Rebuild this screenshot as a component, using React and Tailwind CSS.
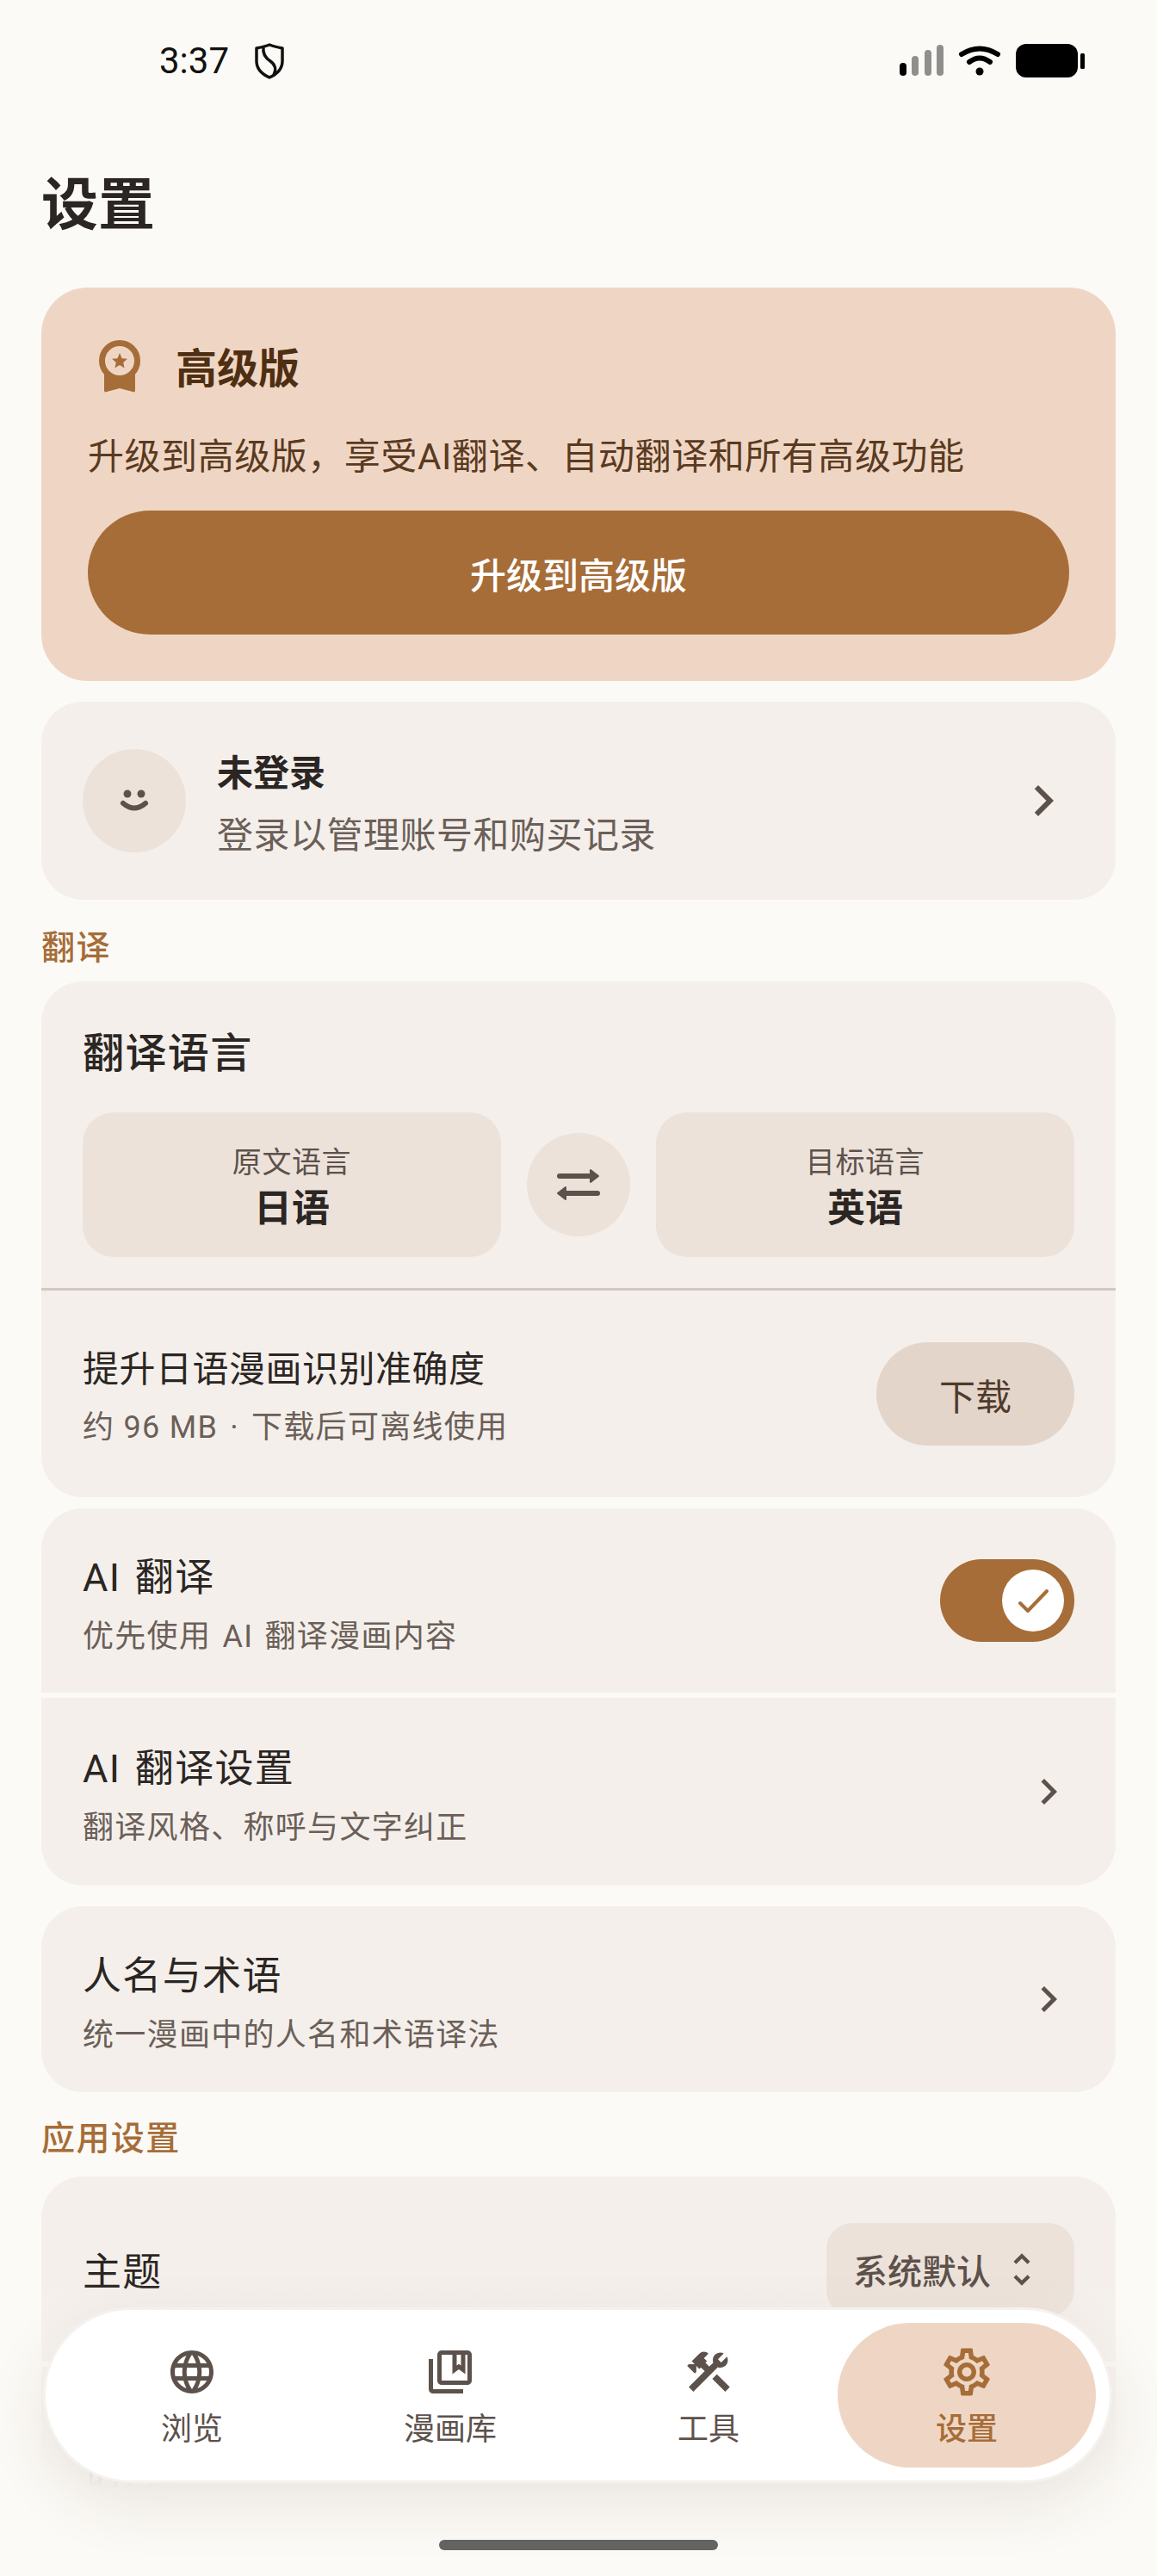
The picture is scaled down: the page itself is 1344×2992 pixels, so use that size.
import {
  MdChevronRight,
  MdConstruction,
  MdLanguage,
  MdOutlineCollectionsBookmark,
  MdOutlineSettings,
  MdUnfoldMore,
} from "react-icons/md";

const navItems = [
  { icon: <MdLanguage size={60} />, label: "浏览" },
  { icon: <MdOutlineCollectionsBookmark size={60} />, label: "漫画库" },
  { icon: <MdConstruction size={60} />, label: "工具" },
  { icon: <MdOutlineSettings size={66} className="-my-[3px]" />, label: "设置", active: true },
];

const StatusBar = () => (
  <div className="h-[190px] relative">
    <div className="flex items-center h-[142px] pl-[185px] pr-[84px]">
      <span className="font-['Roboto'] text-[42px] leading-none text-[#111]">3:37</span>
      <svg width="34" height="42" viewBox="0 0 34 42" fill="none" stroke="#111" strokeWidth="3.5" className="ml-[30px]">
        <path d="M17 2C22 4 27 5 32 6V21C32 30 26 36 17 40C8 36 2 30 2 21V6C7 5 12 4 17 2Z" strokeLinejoin="round" />
        <path d="M10 5C9 12 12 17 18 21C24 25 25 31 22 37" />
      </svg>
      <div className="flex-1" />
      <svg width="215" height="40" viewBox="0 0 215 40">
        <rect x="0" y="22" width="8" height="15" rx="4" fill="#000" />
        <rect x="14" y="14" width="8" height="23" rx="4" fill="#8f8f8d" />
        <rect x="29" y="7" width="8" height="30" rx="4" fill="#8f8f8d" />
        <rect x="43" y="1" width="8" height="36" rx="4" fill="#8f8f8d" />
        <path d="M72 12Q93 -1 114 12" fill="none" stroke="#000" strokeWidth="6" strokeLinecap="round" />
        <path d="M81 21Q93 12 105 21" fill="none" stroke="#000" strokeWidth="6" strokeLinecap="round" />
        <circle cx="93" cy="32" r="4.5" fill="#000" />
        <rect x="135" y="0" width="72" height="39" rx="12" fill="#000" />
        <rect x="210" y="11" width="5" height="18" rx="1.5" fill="#000" />
      </svg>
    </div>
  </div>
);

const MedalIcon = () => (
  <svg width="49" height="62" viewBox="0 0 49 62" fill="none">
    <path d="M7 38H43V59C43 61 42 62 40 61L25 57L10 61C8 62 7 61 7 59Z" fill="#a66d38" />
    <circle cx="25" cy="25" r="20.5" fill="#efd6c4" stroke="#a66d38" strokeWidth="7" />
    <path d="M25 16L27.6 22.2L34 22.8L29.2 27L30.6 33.4L25 30L19.4 33.4L20.8 27L16 22.8L22.4 22.2Z" fill="#a66d38" />
  </svg>
);

const SmileIcon = () => (
  <svg width="40" height="32" viewBox="0 0 40 32" fill="none">
    <circle cx="12" cy="8" r="4.5" fill="#5d514b" />
    <circle cx="28" cy="8" r="4.5" fill="#5d514b" />
    <path d="M7 19Q20 30 33 19" stroke="#5d514b" strokeWidth="6" strokeLinecap="round" />
  </svg>
);

const SwapIcon = () => (
  <svg width="50" height="36" viewBox="0 0 50 36" fill="#5d514b" stroke="#5d514b">
    <path d="M3 8H40" strokeWidth="6" strokeLinecap="round" />
    <path d="M39 1L48 8L39 15Z" strokeWidth="2" strokeLinejoin="round" />
    <path d="M47 28H10" strokeWidth="6" strokeLinecap="round" />
    <path d="M10 21L1 28L10 35Z" strokeWidth="2" strokeLinejoin="round" />
  </svg>
);

const SectionTitle = ({ children, className }) => (
  <div className={`h-[50px] flex items-center text-[39px] tracking-[1.4px] font-medium text-[#a66d38] ${className}`}>{children}</div>
);

const TextPair = ({ title, sub }) => (
  <div className="flex flex-col gap-[10px] mt-[15px]">
    <div className="h-[58px] flex items-center text-[45px] tracking-[1.35px] [word-spacing:4px] text-[#2b2623] whitespace-pre">{title}</div>
    <div className="h-[58px] flex items-center text-[36px] tracking-[1.3px] [word-spacing:3px] text-[#6b5f58] whitespace-pre">{sub}</div>
  </div>
);

const LangBox = ({ label, value }) => (
  <div className="flex-1 h-[168px] pt-[6px] rounded-[36px] bg-[#ece2da] flex flex-col items-center justify-center">
    <div className="text-[34px] tracking-[0.6px] leading-[46px] text-[#5d514b]">{label}</div>
    <div className="mt-[3px] text-[44px] leading-[56px] font-bold text-[#2b2623]">{value}</div>
  </div>
);

const LinkRow = ({ title, sub, className }) => (
  <div className={`flex items-center justify-between px-[48px] bg-[#f4efeb] ${className}`}>
    <TextPair title={title} sub={sub} />
    <MdChevronRight size={60} className="text-[#5d514b]" />
  </div>
);

const BottomNav = () => (
  <div className="absolute left-[50px] top-[2680px] w-[1242px] h-[204px] rounded-full bg-white border-[3px] border-[#f5f2ee] shadow-[0_24px_70px_rgba(70,50,30,0.1)] flex pl-[20px] py-[15px]">
    {navItems.map((item) => (
      <div
        key={item.label}
        className={`w-[300px] h-[168px] rounded-full flex flex-col items-center pt-[27px] ${
          item.active ? "bg-[#efd6c4] text-[#a66d38]" : "text-[#5d514b]"
        }`}
      >
        {item.icon}
        <div className={`mt-[15px] h-[44px] flex items-center text-[36px] ${item.active ? "font-medium" : ""}`}>{item.label}</div>
      </div>
    ))}
  </div>
);

export default function App() {
  return (
    <div className="relative w-[1344px] h-[2992px] overflow-hidden bg-[#fcfaf6] font-['Roboto','Noto_Sans_CJK_SC',sans-serif]">
      <StatusBar />

      <div className="h-[96px] flex items-center pl-[48px] text-[66px] font-bold text-[#2b2623]">设置</div>

      <div className="px-[48px] pt-[48px]">
        {/* Premium card */}
        <div className="rounded-[54px] bg-[#efd6c4] px-[54px] pt-[54px] pb-[54px]">
          <div className="h-[74px] flex items-center">
            <div className="w-[72px] flex justify-center"><MedalIcon /></div>
            <div className="ml-[30px] mt-[8px] text-[48px] font-bold text-[#4f2f12]">高级版</div>
          </div>
          <div className="mt-[36px] h-[64px] flex items-center text-[42px] tracking-[0.55px] text-[#5a3a1f]">升级到高级版，享受AI翻译、自动翻译和所有高级功能</div>
          <div className="mt-[31px] h-[144px] pt-[8px] rounded-full bg-[#a66d38] flex items-center justify-center text-[42px] font-medium text-white">升级到高级版</div>
        </div>

        {/* Login */}
        <div className="mt-[24px] h-[230px] rounded-[48px] bg-[#f4efeb] flex items-center px-[48px]">
          <div className="w-[120px] h-[120px] rounded-full bg-[#ece2da] flex items-center justify-center"><SmileIcon /></div>
          <div className="ml-[36px] mt-[8px] flex-1 flex flex-col gap-[16px]">
            <div className="h-[56px] flex items-center text-[42px] font-bold text-[#2b2623]">未登录</div>
            <div className="h-[56px] flex items-center text-[42px] tracking-[0.5px] text-[#6b5f58]">登录以管理账号和购买记录</div>
          </div>
          <MdChevronRight size={72} className="text-[#5d514b]" />
        </div>

        <SectionTitle className="mt-[31px] mb-[14px]">翻译</SectionTitle>

        {/* Translate language */}
        <div className="rounded-[48px] bg-[#f4efeb] overflow-hidden">
          <div className="px-[48px] pt-[52px] pb-[36px]">
            <div className="h-[64px] flex items-center text-[48px] tracking-[1.4px] font-medium text-[#2b2623]">翻译语言</div>
            <div className="mt-[36px] flex items-center gap-[30px]">
              <LangBox label="原文语言" value="日语" />
              <div className="w-[120px] h-[120px] rounded-full bg-[#ece2da] flex items-center justify-center"><SwapIcon /></div>
              <LangBox label="目标语言" value="英语" />
            </div>
          </div>
          <div className="h-[3px] bg-[#d3c8c1]" />
          <div className="h-[240px] flex items-center justify-between px-[48px]">
            <div className="flex flex-col gap-[10px] mt-[10px]">
              <div className="h-[58px] flex items-center text-[42px] tracking-[0.5px] text-[#2b2623]">提升日语漫画识别准确度</div>
              <div className="h-[58px] flex items-center text-[36px] tracking-[1.3px] text-[#6b5f58] whitespace-pre">
                约 96 MB<span className="mx-[14px]">·</span>下载后可离线使用
              </div>
            </div>
            <div className="w-[230px] h-[120px] pt-[8px] rounded-full bg-[#e3d5ca] flex items-center justify-center text-[42px] text-[#4f3a2a]">下载</div>
          </div>
        </div>

        {/* AI */}
        <div className="mt-[13px] rounded-[48px] overflow-hidden flex flex-col gap-[6px]">
          <div className="h-[214px] bg-[#f4efeb] flex items-center justify-between px-[48px]">
            <TextPair title="AI 翻译" sub="优先使用 AI 翻译漫画内容" />
            <div className="w-[156px] h-[96px] rounded-full bg-[#a66d38] flex items-center justify-end pr-[12px]">
              <div className="w-[72px] h-[72px] rounded-full bg-white flex items-center justify-center">
                <svg width="40" height="32" viewBox="0 0 40 32" fill="none">
                  <path d="M5 19L14 28L36 5" stroke="#a66d38" strokeWidth="4" strokeLinecap="round" strokeLinejoin="round" />
                </svg>
              </div>
            </div>
          </div>
          <LinkRow title="AI 翻译设置" sub="翻译风格、称呼与文字纠正" className="h-[218px]" />
        </div>

        <LinkRow title="人名与术语" sub="统一漫画中的人名和术语译法" className="mt-[24px] h-[216px] rounded-[48px]" />

        <SectionTitle className="mt-[29px] mb-[19px]">应用设置</SectionTitle>

        {/* App settings */}
        <div className="rounded-t-[48px] bg-[#f4efeb]">
          <div className="h-[215px] flex items-center justify-between px-[48px]">
            <div className="mt-[8px] text-[45px] text-[#2b2623] tracking-[1.35px]">主题</div>
            <div className="w-[288px] h-[108px] rounded-[30px] bg-[#ece2da] flex items-center pl-[31px] text-[40px] font-medium text-[#5d514b]">
              <span className="mt-[8px]">系统默认</span>
              <MdUnfoldMore size={50} className="ml-[11px] text-[#5d514b]" />
            </div>
          </div>
          <div className="h-[6px] bg-[#fcfaf6]" />
          <div className="h-[200px] px-[48px] pt-[90px] text-[45px] text-[#2b2623]">语言</div>
        </div>
      </div>

      {/* fade under the floating nav */}
      <div className="absolute inset-x-0 top-[2650px] h-[240px] bg-linear-to-b from-[#fcfaf6]/0 to-[#fcfaf6]" />
      <div className="absolute inset-x-0 top-[2890px] bottom-0 bg-[#fcfaf6]" />

      <BottomNav />
      <div className="absolute left-[510px] top-[2950px] w-[324px] h-[12px] rounded-full bg-[#636361]" />
    </div>
  );
}
